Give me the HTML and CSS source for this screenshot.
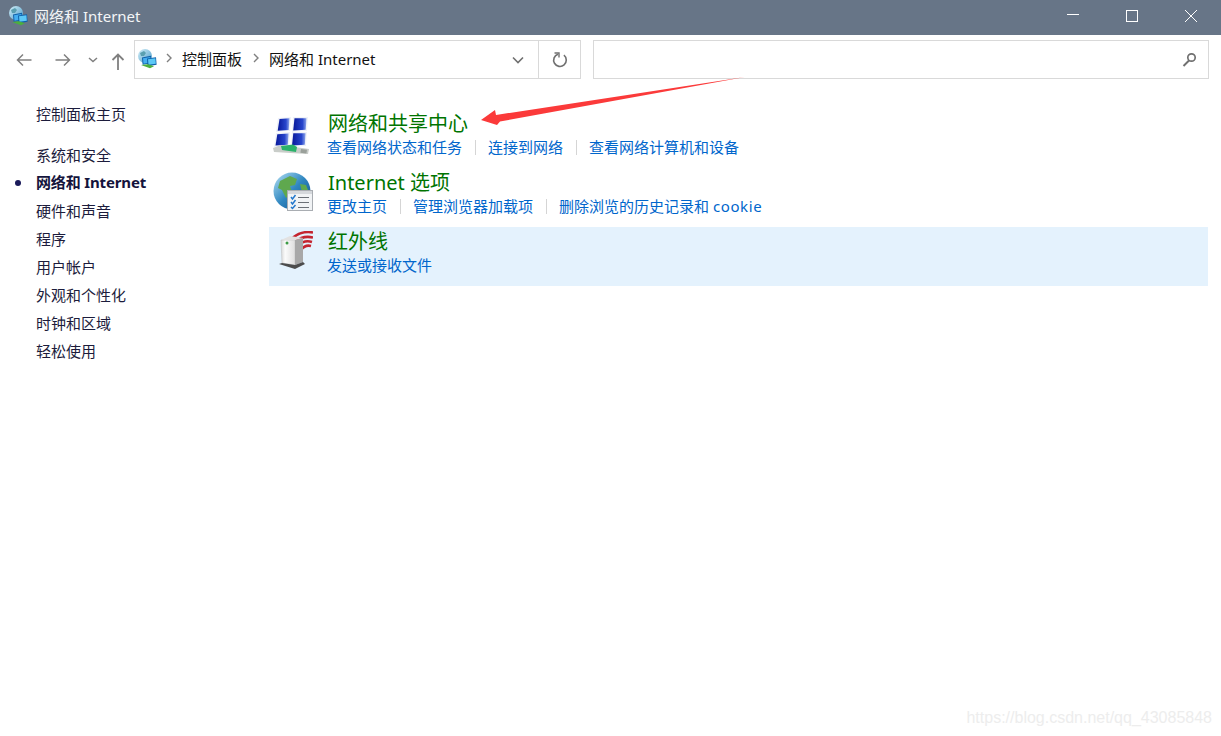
FILE: index.html
```html
<!DOCTYPE html>
<html lang="zh-CN">
<head>
<meta charset="utf-8">
<title>网络和 Internet</title>
<link rel="stylesheet" href="styles.css">
</head>
<body>
<svg class="defs" width="0" height="0" aria-hidden="true">
  <defs>
    <linearGradient id="globe" x1="0" y1="0" x2="1" y2="1"><stop offset="0" stop-color="#b5e2f4"/><stop offset=".5" stop-color="#2f86c0"/><stop offset="1" stop-color="#0f4c86"/></linearGradient>
    <linearGradient id="appglobe" x1="0" y1="0" x2="1" y2="1"><stop offset="0" stop-color="#d3eef8"/><stop offset="1" stop-color="#4a9cc8"/></linearGradient>
    <linearGradient id="pane" x1="0" y1="0" x2="1" y2="0"><stop offset="0" stop-color="#08189a"/><stop offset=".7" stop-color="#2745cc"/><stop offset="1" stop-color="#8ea6ea"/></linearGradient>
    <linearGradient id="tower" x1="0" y1="0" x2="1" y2="0"><stop offset="0" stop-color="#d8d8d8"/><stop offset=".3" stop-color="#fbfbfb"/><stop offset="1" stop-color="#dedede"/></linearGradient>
    <symbol id="netapp" viewBox="0 0 20 20">
      <circle cx="8" cy="7" r="7" fill="url(#appglobe)"/>
      <path d="M3 4l4-2 2 2-2 3-3 0z" fill="#5a9fb0"/>
      <path d="M5 8.500l9-1.800.6 7.500-9 1.600z" fill="#0f5fa8"/>
      <path d="M6 9.300l7.300-1.400.4 5.500-7.200 1.300z" fill="#44aef0"/>
      <path d="M10 9.500l9-1.200.6 7.500-9 1.400z" fill="#0f5fa8"/>
      <path d="M11 10.300l7.400-1 .4 5.500-7.300 1z" fill="#5cc8f6"/>
      <path d="M4 16l7-.8 6 2-4 2z" fill="#4caf3e"/>
    </symbol>
  </defs>
</svg>

<header class="titlebar">
  <div class="title-left">
    <svg class="app-icon" width="20" height="20"><use href="#netapp"/></svg>
    <span class="title-text">网络和 Internet</span>
  </div>
  <div class="win-controls">
    <span class="win-btn"><svg width="14" height="14" viewBox="0 0 14 14"><path d="M1 5.500h12" stroke="#fff" fill="none"/></svg></span>
    <span class="win-btn"><svg width="14" height="14" viewBox="0 0 14 14"><rect x="1.500" y="1.500" width="11" height="11" stroke="#fff" fill="none"/></svg></span>
    <span class="win-btn"><svg width="14" height="14" viewBox="0 0 14 14"><path d="M1 1l12 12M13 1L1 13" stroke="#fff" fill="none"/></svg></span>
  </div>
</header>

<nav class="toolbar">
  <div class="nav-btns">
    <svg class="nav-back" width="16" height="14" viewBox="0 0 16 14"><path d="M15.500 7H1.500M7 1.500L1.500 7 7 12.500" stroke="#808080" stroke-width="1.500" fill="none"/></svg>
    <svg class="nav-fwd" width="16" height="14" viewBox="0 0 16 14"><path d="M0.500 7h14M9 1.500L14.500 7 9 12.500" stroke="#808080" stroke-width="1.500" fill="none"/></svg>
    <svg class="nav-down" width="10" height="6" viewBox="0 0 10 6"><path d="M1 1L5 4.500 9 1" stroke="#808080" stroke-width="1.500" fill="none"/></svg>
    <svg class="nav-up" width="14" height="17" viewBox="0 0 14 17"><path d="M7 17V1.500M1.500 7L7 1.500 12.500 7" stroke="#808080" stroke-width="1.800" fill="none"/></svg>
  </div>
  <div class="address">
    <svg class="addr-icon" width="20" height="20"><use href="#netapp"/></svg>
    <svg class="crumb-sep first" width="6" height="10" viewBox="0 0 6 10"><path d="M1 1l4 4-4 4" stroke="#808080" stroke-width="1.400" fill="none"/></svg>
    <span class="crumb">控制面板</span>
    <svg class="crumb-sep" width="6" height="10" viewBox="0 0 6 10"><path d="M1 1l4 4-4 4" stroke="#808080" stroke-width="1.400" fill="none"/></svg>
    <span class="crumb">网络和 Internet</span>
    <span class="addr-spacer"></span>
    <span class="addr-drop"><svg width="12" height="8" viewBox="0 0 12 8"><path d="M1 1.500l5 5 5-5" stroke="#707070" stroke-width="1.600" fill="none"/></svg></span>
    <span class="addr-refresh"><svg width="16" height="16" viewBox="0 0 16 16"><path d="M5 2.600A6.300 6.300 0 1 0 11 2.600" stroke="#707070" stroke-width="1.600" fill="none" transform="rotate(10 8 8)"/><path d="M2.500 1h4.500v4.500" stroke="#707070" stroke-width="1.400" fill="none"/></svg></span>
  </div>
  <div class="search">
    <svg width="15" height="15" viewBox="0 0 15 15"><circle cx="9.500" cy="5.500" r="3.700" stroke="#707070" stroke-width="1.700" fill="none"/><path d="M7 8.500L1.500 14" stroke="#707070" stroke-width="2" fill="none"/></svg>
  </div>
</nav>

<div class="body">
  <aside class="sidebar">
    <a class="side-home">控制面板主页</a>
    <ul class="side-list">
      <li class="side-item">系统和安全</li>
      <li class="side-item current">网络和 Internet</li>
      <li class="side-item tall">硬件和声音</li>
      <li class="side-item">程序</li>
      <li class="side-item">用户帐户</li>
      <li class="side-item">外观和个性化</li>
      <li class="side-item">时钟和区域</li>
      <li class="side-item">轻松使用</li>
    </ul>
  </aside>

  <main class="content">
    <section class="cat">
      <svg class="cat-icon icon-net" width="40" height="40" viewBox="0 0 40 40">
        <path d="M5 2l13-1-1 14-14 1z" fill="#eef1f8"/>
        <path d="M6.500 3l10-.7-.8 11.700-11 .8z" fill="url(#pane)"/>
        <path d="M20 1l15 0-1 14-15 1z" fill="#eef1f8"/>
        <path d="M21.500 2.300l12 0-.8 11.500-12.500.8z" fill="url(#pane)"/>
        <path d="M3 17l14-1-1 14-15 1z" fill="#eef1f8"/>
        <path d="M4.300 18.300l11.300-.8-.8 11.300-12.300.8z" fill="url(#pane)"/>
        <path d="M19 16l15 0-1 14-15 1z" fill="#eef1f8"/>
        <path d="M20.300 17.300l12.300 0-.8 11.500-12.800.7z" fill="url(#pane)"/>
        <path d="M0 32l8-3 28 4-1 5-9-.5L1 36z" fill="#c9cdc9"/>
        <path d="M8 30l12-1.500 4 2.500-1 5-14-2z" fill="#2bb26a"/>
        <path d="M28 33l6 .8-.6 3.600-6-.6z" fill="#9aa09a"/>
      </svg>
      <div class="cat-text">
        <h2 class="cat-title">网络和共享中心</h2>
        <p class="cat-links"><a>查看网络状态和任务</a><a>连接到网络</a><a>查看网络计算机和设备</a></p>
      </div>
    </section>
    <section class="cat">
      <svg class="cat-icon icon-globe" width="40" height="40" viewBox="0 0 40 40">
        <circle cx="19" cy="19" r="18.500" fill="url(#globe)"/>
        <path d="M7 9l10-5 7 3-2 6-5 1 2 6-6 6-4-8-4-2z" fill="#5fa84e"/>
        <path d="M27 12l6 1 2 5-6 2z" fill="#5fa84e"/>
        <rect x="14.500" y="18.500" width="25" height="20" fill="#f1f3f5" stroke="#a9adb2"/>
        <rect x="15" y="19" width="24" height="3" fill="#d5d8dc"/>
        <path d="M18 25l1.500 2 3-4M18 30l1.500 2 3-4M18 35l1.500 1.500 3-3.500" stroke="#2277cc" stroke-width="1.500" fill="none"/>
        <path d="M25 25.500h11M25 30.500h11M25 35.500h11" stroke="#6b7077" stroke-width="1.200"/>
      </svg>
      <div class="cat-text">
        <h2 class="cat-title">Internet 选项</h2>
        <p class="cat-links"><a>更改主页</a><a>管理浏览器加载项</a><a>删除浏览的历史记录和 <span class="latin">cookie</span></a></p>
      </div>
    </section>
    <section class="cat selected">
      <svg class="cat-icon icon-ir" width="40" height="40" viewBox="0 0 40 40">
        <path d="M20 6.500Q29 -.5 40 1.500M22 11Q30 4 40 6.500M25 15Q31 8.500 39 11M28 19Q32 13.500 38 15" stroke="#c4242f" stroke-width="2.600" fill="none"/>
        <path d="M8 9l14 0 0 25-13-2z" fill="url(#tower)" stroke="#bdbdbd" stroke-width=".5"/>
        <path d="M22 9l8-2 0 24-8 3z" fill="#a8a8a8"/>
        <path d="M8 9l9-4 13 2-8 2z" fill="#e2e2e2"/>
        <circle cx="14" cy="12" r="1.500" fill="#3d9b45"/>
        <path d="M6 33l3-1 13 2 8-3 2 2-10 5z" fill="#4c4c4c"/>
      </svg>
      <div class="cat-text">
        <h2 class="cat-title">红外线</h2>
        <p class="cat-links"><a>发送或接收文件</a></p>
      </div>
    </section>
  </main>
</div>

<svg class="arrow" width="270" height="50" viewBox="0 0 270 50">
  <path d="M1 44L15 34 16 39 265 1 20 45.500 17 49z" fill="#fb3a3a"/>
</svg>
<span class="watermark">https://blog.csdn.net/qq_43085848</span>
</body>
</html>
```

FILE: styles.css
```css
* { box-sizing: border-box; }
html, body { margin: 0; padding: 0; height: 100%; }
body {
  position: relative;
  width: 1221px;
  height: 736px;
  overflow: hidden;
  background: #fff;
  font-family: "Noto Sans", "Noto Sans CJK SC", sans-serif;
  font-size: 15px;
  color: #1a1a1a;
}
.defs { position: absolute; }

.titlebar {
  height: 35px;
  background: #677587;
  color: #fff;
  display: flex;
  align-items: center;
  justify-content: space-between;
}
.title-left { display: flex; align-items: center; padding-left: 8px; gap: 6px; }
.title-text { font-size: 15px; line-height: 35px; color: #f4f6f8; margin-top: -2px; }
.app-icon { margin-top: -3px; }
.win-controls { display: flex; padding-right: 1px; }
.win-btn { width: 59px; height: 35px; display: flex; align-items: center; justify-content: center; margin-top: -3px; }

.toolbar { height: 44px; padding-top: 5px; display: flex; align-items: flex-start; }
.nav-btns { width: 134px; height: 39px; display: flex; align-items: center; padding-left: 16px; }
.nav-fwd { margin-left: 23px; }
.nav-down { margin-left: 17px; margin-top: 1px; }
.nav-up { margin-left: 13px; margin-top: 3px; }
.address {
  width: 447px;
  height: 39px;
  border: 1px solid #d9d9d9;
  display: flex;
  align-items: center;
  padding-left: 2px;
}
.addr-icon { flex: none; margin-top: -2px; }
.crumb-sep { flex: none; margin-top: -3px; margin-left: 11px; margin-right: 10px; }
.crumb-sep.first { margin-left: 9px; margin-right: 10px; }
.crumb { line-height: 37px; color: #111; white-space: nowrap; }
.addr-spacer { flex: 1; }
.addr-drop { width: 41px; height: 37px; display: flex; align-items: center; justify-content: center; }
.addr-refresh { width: 42px; height: 37px; border-left: 1px solid #d9d9d9; display: flex; align-items: center; justify-content: center; }
.search {
  width: 616px;
  height: 39px;
  margin-left: 12px;
  border: 1px solid #d9d9d9;
  display: flex;
  align-items: center;
  justify-content: flex-end;
  padding-right: 11px;
}

.body { display: flex; }
.sidebar { width: 269px; padding-left: 36px; padding-top: 21px; flex: none; }
.side-home { display: block; line-height: 28px; color: #1c1c3c; }
.side-list { list-style: none; margin: 13px 0 0; padding: 0; }
.side-item { line-height: 28px; color: #1c1c3c; white-space: nowrap; }
.side-item.current { position: relative; font-weight: 700; color: #14143c; height: 27px; line-height: 27px; letter-spacing: -.15px; }
.side-item.tall { height: 29px; line-height: 30px; }
.side-item.current::before {
  content: "";
  position: absolute;
  left: -21px;
  top: 11px;
  width: 6px;
  height: 6px;
  border-radius: 50%;
  background: #1a1a5a;
}

.content { width: 939px; padding-top: 30px; display: flex; flex-direction: column; }
.cat { display: flex; height: 59px; padding-left: 4px; }
.cat.selected { background: #e4f2fd; }
.cat-icon { flex: none; }
.icon-net { margin-top: 7px; }
.icon-globe { margin-top: 4px; }
.icon-ir { margin-top: 4px; }
.cat-text { margin-left: 15px; }
.cat-title {
  margin: 2px 0 0;
  font-size: 20px;
  font-weight: 400;
  line-height: 26px;
  color: #007400;
  white-space: nowrap;
}
.cat-links { margin: 0 0 0 -1px; line-height: 22px; display: flex; white-space: nowrap; }
.cat-links a { color: #0066cc; padding-right: 13px; margin-right: 12px; border-right: 1px solid #d5d5d5; line-height: 15px; margin-top: 3px; height: 15px; display: block; }
.cat-links a:last-child { border-right: 0; }
.latin { letter-spacing: .6px; }

.arrow { position: absolute; left: 480px; top: 76px; }
.watermark {
  position: absolute;
  right: 9px;
  top: 709px;
  font-family: "Liberation Sans", sans-serif;
  font-size: 16px;
  color: #ededed;
  white-space: nowrap;
}
```
